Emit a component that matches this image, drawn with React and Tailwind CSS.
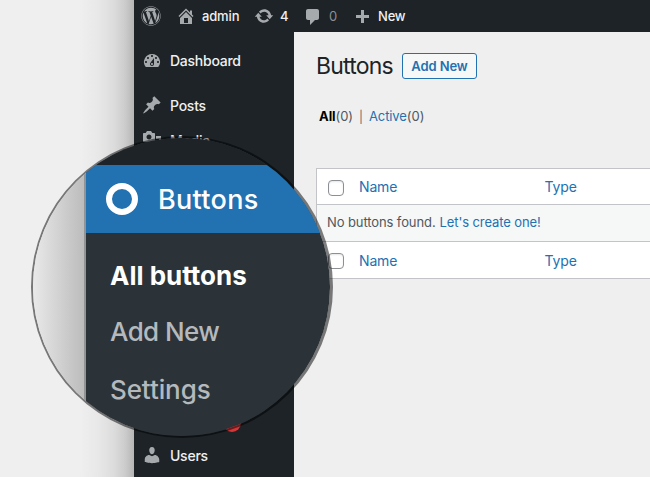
import React from "react";
import { FaWordpress } from "react-icons/fa";

const PATHS = {
  home: "M16 8.5l1.53 1.53-1.06 1.06L10 4.6l-6.47 6.49-1.06-1.06L10 2.5l4 4v-2h2v4zm-6-2.46l6 5.99V18H4v-5.97zM12 17v-5H8v5h4z",
  update:
    "M10.2 3.28c3.53 0 6.43 2.61 6.92 6h2.08l-3.5 4-3.5-4h2.32c-.45-1.97-2.21-3.45-4.32-3.45-1.45 0-2.73.71-3.54 1.78L4.95 5.66C6.23 4.2 8.11 3.28 10.2 3.28zm-.4 13.44c-3.52 0-6.43-2.61-6.92-6H.8l3.5-4c1.17 1.33 2.33 2.67 3.5 4H5.48c.45 1.97 2.21 3.45 4.32 3.45 1.45 0 2.73-.71 3.54-1.78l1.71 1.95c-1.28 1.46-3.15 2.38-5.25 2.38z",
  comment: "M5 2h9c1.1 0 2 .9 2 2v7c0 1.1-.9 2-2 2h-2l-5 5v-5H5c-1.1 0-2-.9-2-2V4c0-1.1.9-2 2-2z",
  plus: "M17 7v3h-5v5H9v-5H4V7h5V2h3v5h5z",
  dashboard:
    "M3.76 17h12.48A7.998 7.998 0 0 0 10 4a8 8 0 0 0-6.24 13zM10 5c.55 0 1 .45 1 1s-.45 1-1 1-1-.45-1-1 .45-1 1-1zM6 7c.55 0 1 .45 1 1s-.45 1-1 1-1-.45-1-1 .45-1 1-1zm8 0c.55 0 1 .45 1 1s-.45 1-1 1-1-.45-1-1 .45-1 1-1zm-5.37 5.55L12 8v6c0 1.1-.9 2-2 2s-2-.9-2-2c0-.57.24-1.08.63-1.45zM4 11c.55 0 1 .45 1 1s-.45 1-1 1-1-.45-1-1 .45-1 1-1zm12 0c.55 0 1 .45 1 1s-.45 1-1 1-1-.45-1-1 .45-1 1-1zm-5 3c0-.55-.45-1-1-1s-1 .45-1 1 .45 1 1 1 1-.45 1-1z",
  pin: "M10.44 3.02l1.82-1.82 6.36 6.35-1.83 1.82c-1.05-.68-2.48-.57-3.41.36l-.75.75c-.92.93-1.04 2.35-.35 3.41l-1.83 1.82-2.41-2.41-2.8 2.79c-.42.42-3.38 2.71-3.8 2.29s1.86-3.39 2.28-3.81l2.79-2.79L4.1 9.36l1.83-1.82c1.05.69 2.48.57 3.4-.36l.75-.75c.93-.92 1.05-2.35.36-3.41z",
  media:
    "M13 11V4c0-.55-.45-1-1-1h-1.67L9 1H5L3.67 3H2c-.55 0-1 .45-1 1v7c0 .55.45 1 1 1h10c.55 0 1-.45 1-1zM7 4.5c1.38 0 2.5 1.12 2.5 2.5S8.38 9.5 7 9.5 4.5 8.38 4.5 7 5.62 4.5 7 4.5zM14 6h5v10.5c0 1.38-1.12 2.5-2.5 2.5S14 17.88 14 16.5s1.12-2.5 2.5-2.5c.17 0 .34.02.5.05V9h-3V6z",
  user: "M10 9.25c-2.27 0-2.73-3.44-2.73-3.44C7 4.02 7.82 2 9.97 2c2.16 0 2.98 2.02 2.71 3.81 0 0-.41 3.44-2.68 3.44zM12.72 10c2.39 0 4.52 2.33 4.52 4.53v2.49s-3.65 1.13-7.24 1.13c-3.65 0-7.24-1.13-7.24-1.13v-2.49c0-2.25 1.94-4.48 4.47-4.48L10 11.3z",
};

function Icon({ name, className = "" }) {
  return (
    <svg viewBox="0 0 20 20" fillRule="evenodd" className={`shrink-0 fill-[#a7aaad] ${className}`}>
      <path d={PATHS[name]} />
    </svg>
  );
}

function AdminBar() {
  return (
    <header className="flex h-8 items-center bg-[#1d2327] pl-[7px] text-[13px] font-medium text-[#f0f0f1]">
      <FaWordpress className="size-5 shrink-0 text-[#a7aaad]" />
      <Icon name="home" className="ml-[15px] size-5" />
      <span className="mt-px ml-[6px] w-[52px] tracking-[-0.15px]">admin</span>
      <Icon name="update" className="size-5" />
      <span className="mt-px ml-[6px] w-[23px]">4</span>
      <Icon name="comment" className="mt-[2px] size-5" />
      <span className="mt-px ml-[6px] w-[23px] font-normal text-[#8c8f94]">0</span>
      <Icon name="plus" className="mt-[3px] size-5" />
      <span className="mt-px ml-[6px] tracking-[-0.2px]">New</span>
    </header>
  );
}

function MenuItem({ icon, label, className }) {
  return (
    <div className={`flex h-9 items-center gap-2 pl-2 text-[14px] font-medium tracking-[-0.25px] text-[#f0f0f1] ${className}`}>
      <Icon name={icon} className="size-5" />
      <span>{label}</span>
    </div>
  );
}

function Sidebar() {
  return (
    <nav className="flex w-40 shrink-0 flex-col bg-[#1d2327]">
      <MenuItem icon="dashboard" label="Dashboard" className="mt-[10px]" />
      <MenuItem icon="pin" label="Posts" className="mt-[9px]" />
      <MenuItem icon="media" label="Media" className="-mt-px" />
      <div className="mt-auto mb-[5px] ml-[89px] size-[18px] rounded-full bg-[#d63638]" />
      <MenuItem icon="user" label="Users" className="mb-[4px]" />
    </nav>
  );
}

function HeadingRow() {
  return (
    <div className="flex h-9 items-center bg-white pl-[11px] text-[14px] tracking-[-0.15px] text-[#2271b1]">
      <span className="mt-[2px] size-4 rounded-[4px] border border-[#8c8f94] bg-white shadow-[inset_0_1px_2px_rgba(0,0,0,0.1)]" />
      <span className="ml-[15px] w-[185.5px]">Name</span>
      <span>Type</span>
    </div>
  );
}

function Content() {
  return (
    <main className="min-w-0 flex-1 bg-[#efefef] pl-[22px]">
      <div className="flex h-[68px] items-center">
        <h1 className="mt-px w-[86px] text-[23px] tracking-[-0.8px] text-[#1d2327]">Buttons</h1>
        <button className="h-[26px] w-[75px] rounded-[3px] border border-[#2271b1] bg-[#f6f7f7] pt-px text-[13px] font-semibold tracking-[-0.1px] text-[#2271b1]">
          Add New
        </button>
      </div>
      <div className="flex h-[34px] items-center pl-[3px] text-[13px] tracking-[-0.08px] text-[#50575e]">
        <b className="font-bold text-black">All</b>
        <span>(0)</span>
        <span className="mx-[6px] text-[12px] text-[#646970]">|</span>
        <span className="text-[#2271b1]">Active</span>
        <span>(0)</span>
      </div>
      <div className="mt-[34px] flex flex-col divide-y divide-[#c3c4c7] border border-r-0 border-[#c3c4c7]">
        <HeadingRow />
        <div className="flex h-[37px] items-center bg-[#f6f7f7] pl-[10px] text-[13px] tracking-[-0.1px] text-[#50575e]">
          No buttons found.
          <span className="ml-1 text-[#2271b1]">Let&apos;s create one!</span>
        </div>
        <HeadingRow />
      </div>
    </main>
  );
}

function Lens() {
  return (
    <aside className="absolute top-[136px] left-[31px] size-[302px] rounded-full border-2 border-r-[3px] border-black/50">
      <div className="flex size-full overflow-hidden rounded-full">
        <div className="w-[51px] shrink-0 bg-linear-to-r from-[#e9e9e9] to-[#bcbcbc]" />
        <div className="w-[2px] shrink-0 bg-[#929496]" />
        <div className="flex flex-1 flex-col bg-[#2c3338] text-[26px] leading-none">
          <div className="h-[27px] bg-[#1d2327]" />
          <div className="flex h-[68px] items-center bg-[#2271b1] pl-5 text-white">
            <span className="size-8 rounded-full border-[6px] border-white" />
            <span className="ml-[20px] text-[27px] font-medium tracking-[0.3px]">Buttons</span>
          </div>
          <div className="flex flex-col pt-[29px] pl-6 text-[#b4b9be]">
            <span className="flex h-7 items-center font-bold text-white">All buttons</span>
            <span className="mt-7 flex h-7 items-center font-medium tracking-[-0.6px]">Add New</span>
            <span className="mt-[30px] flex h-7 items-center font-medium tracking-[-0.1px]">Settings</span>
          </div>
        </div>
      </div>
    </aside>
  );
}

export default function App() {
  return (
    <div className="relative flex h-[477px] w-[650px] overflow-hidden bg-[#efefef] font-['Inter','Liberation_Sans',sans-serif]">
      <div className="w-[134px] shrink-0 bg-[linear-gradient(to_right,#efefef_80px,#e8e8e8_98px,#dcdcdc_114px,#cccccc_125px,#b6b6b6_134px)]" />
      <div className="flex min-w-0 flex-1 flex-col">
        <AdminBar />
        <div className="flex flex-1">
          <Sidebar />
          <Content />
        </div>
      </div>
      <Lens />
    </div>
  );
}
